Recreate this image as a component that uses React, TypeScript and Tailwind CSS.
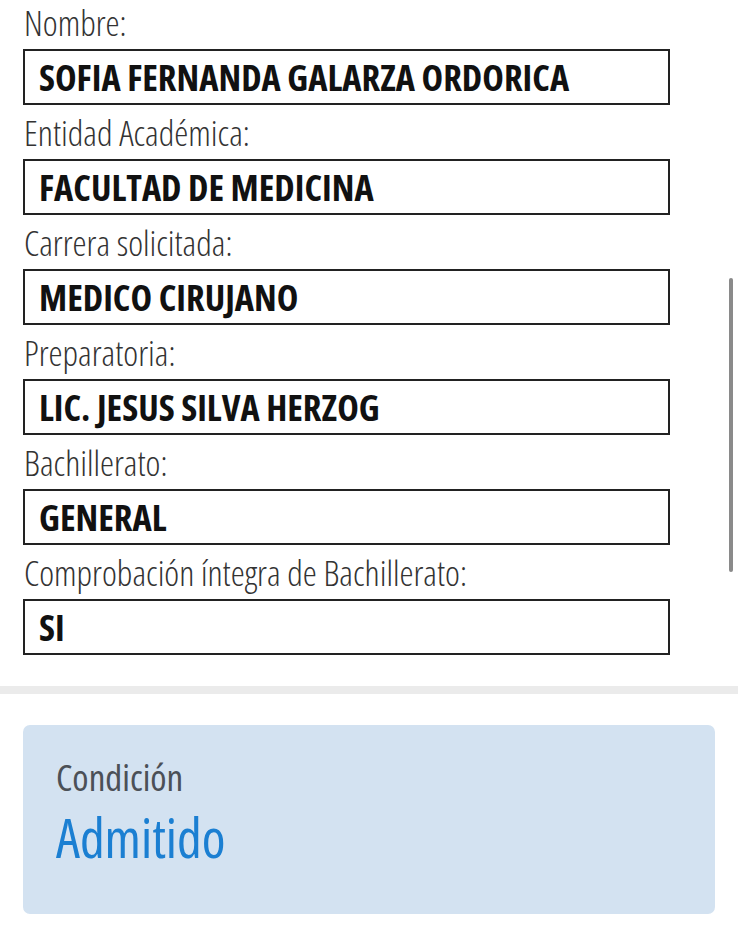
import React from "react";

const fields = [
  { label: "Nombre:", value: "SOFIA FERNANDA GALARZA ORDORICA" },
  { label: "Entidad Académica:", value: "FACULTAD DE MEDICINA" },
  { label: "Carrera solicitada:", value: "MEDICO CIRUJANO" },
  { label: "Preparatoria:", value: "LIC. JESUS SILVA HERZOG" },
  { label: "Bachillerato:", value: "GENERAL" },
  { label: "Comprobación íntegra de Bachillerato:", value: "SI" },
];

const App = () => {
  return (
    <div className="relative w-[738px] h-[943px] overflow-hidden bg-white font-['Open_Sans',sans-serif]">
      {/* datos del aspirante */}
      <div className="flex flex-col gap-[5px] pl-[23px] pr-[68px]">
        {fields.map((f) => (
          <div key={f.label} className="flex flex-col">
            <div className="h-[49px] leading-[45px] pl-px text-[35.5px] font-light font-stretch-condensed text-[#333] whitespace-nowrap">
              {f.label}
            </div>
            <div className="h-[56px] border-2 border-[#222] pl-[14px] leading-[52px] text-[36.5px] font-bold font-stretch-condensed text-[#111] whitespace-nowrap">
              {f.value}
            </div>
          </div>
        ))}
      </div>

      <div className="mt-[31px] h-[8px] bg-[#ebebeb]" />

      <div className="px-[23px] pt-[31px]">
        <div className="h-[189px] rounded-[7px] bg-[#d3e2f1] pl-[33px] pt-[30px]">
          <div className="text-[37px] leading-[44px] font-medium font-stretch-condensed text-[#4b5057]">Condición</div>
          <div className="mt-[8px] text-[54px] leading-[60px] font-medium font-stretch-condensed text-[#1b7fd2]">Admitido</div>
        </div>
      </div>

      {/* scroll thumb */}
      <div className="absolute left-[729px] top-[278px] w-[4px] h-[294px] rounded-full bg-[#8a8a8a]" />
    </div>
  );
};

export default App;
